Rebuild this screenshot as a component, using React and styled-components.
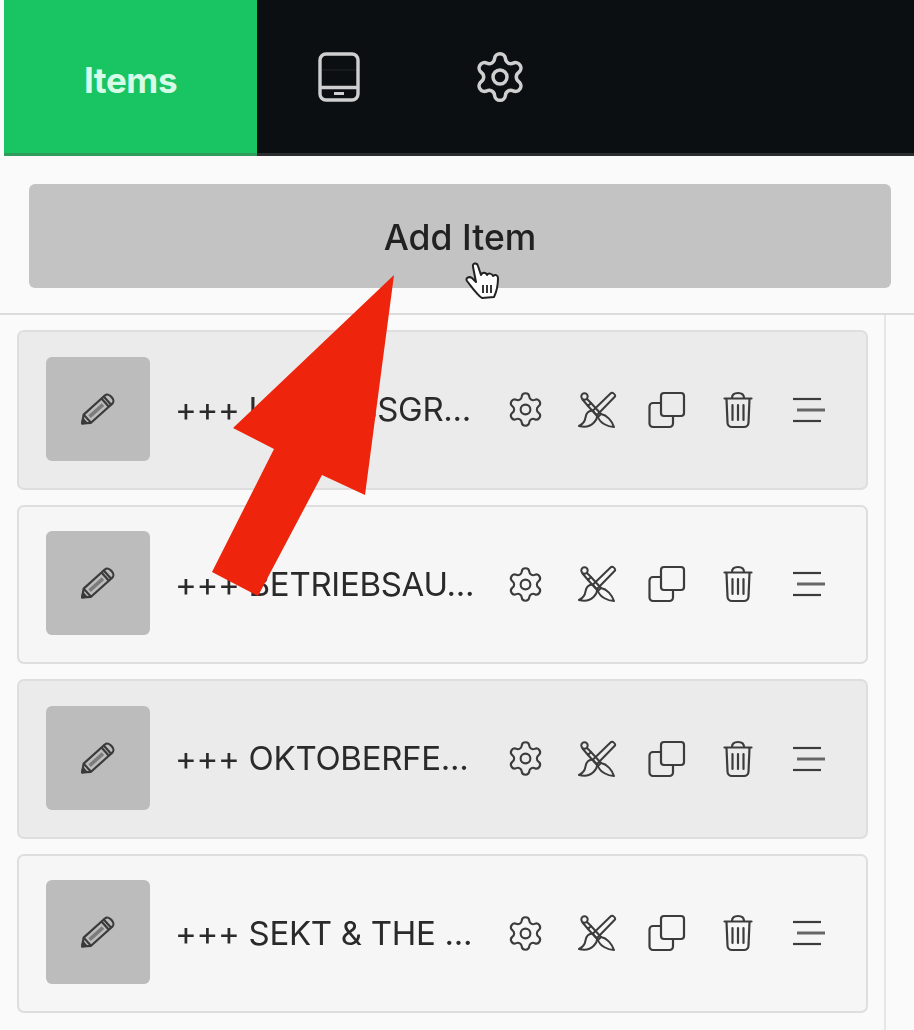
import React from 'react';
import styled, { createGlobalStyle } from 'styled-components';
import { Settings } from 'lucide-react';

const GlobalStyle = createGlobalStyle`
  html, body {
    margin: 0;
    padding: 0;
    background: #fafafa;
  }
`;

const Page = styled.div`
  position: relative;
  width: 914px;
  height: 1030px;
  overflow: hidden;
  background: #fafafa;
  font-family: Inter, "Liberation Sans", sans-serif;
`;

const Content = styled.div`
  position: relative;
  height: 1030px;
  filter: blur(0.6px);
`;

const TopBar = styled.div`
  display: flex;
  align-items: stretch;
  height: 153px;
  margin-left: 4px;
  background: #0b0f11;
  border-bottom: 3px solid #2b2e30;
`;

const ActiveTab = styled.div`
  display: flex;
  align-items: center;
  justify-content: center;
  width: 253px;
  margin-bottom: -3px;
  padding-top: 7px;
  box-sizing: border-box;
  background: #19c463;
  border-bottom: 3px solid #2f9c5c;
  color: #d6fbe6;
  font-size: 35px;
  font-weight: 700;
  letter-spacing: -0.4px;
`;

const TabIcon = styled.div`
  display: flex;
  align-items: center;
  justify-content: center;
  width: ${(p) => p.$width}px;
  color: #cfcfcf;
`;

const Toolbar = styled.div`
  box-sizing: border-box;
  height: 159px;
  padding: 28px 23px 25px 29px;
  border-bottom: 2px solid #dcdcdc;
`;

const AddButton = styled.div`
  display: flex;
  align-items: center;
  justify-content: center;
  box-sizing: border-box;
  height: 104px;
  padding-top: 2px;
  border-radius: 6px;
  background: #c3c3c3;
  color: #222;
  font-size: 35.5px;
  font-weight: 500;
`;

const ListArea = styled.div`
  display: flex;
  flex-direction: column;
  gap: 15px;
  box-sizing: border-box;
  width: 886px;
  height: 716px;
  padding: 15px 16px 0 17px;
  border-right: 2px solid #e6e6e6;
`;

const Card = styled.div`
  display: flex;
  align-items: center;
  flex: none;
  box-sizing: border-box;
  width: 851px;
  height: 159.5px;
  padding-left: 27px;
  border: 2px solid #dedede;
  border-radius: 7px;
  background: ${(p) => (p.$shaded ? '#ebebeb' : '#f6f6f6')};
`;

const Thumb = styled.div`
  display: flex;
  align-items: center;
  justify-content: center;
  flex: none;
  box-sizing: border-box;
  width: 104px;
  height: 104px;
  margin-bottom: 2px;
  padding: 2px 3px 0 0;
  border-radius: 6px;
  background: #bcbcbc;
  color: #3a3a3a;
`;

const CardTitle = styled.div`
  flex: none;
  width: 315.5px;
  margin-left: 25px;
  margin-bottom: 1px;
  color: #2a2a2a;
  font-size: 33px;
  font-weight: 400;
  letter-spacing: -0.3px;
  white-space: nowrap;
`;

const Actions = styled.div`
  display: flex;
  align-items: center;
`;

const ActionSlot = styled.div`
  display: flex;
  align-items: center;
  justify-content: center;
  width: 70.8px;
  color: #3c3c3c;
`;

const Overlay = styled.svg`
  position: absolute;
  top: 0;
  left: 0;
  pointer-events: none;
`;

const TabletIcon = () => (
  <svg width="44" height="52" viewBox="0 0 44 52" fill="none" stroke="currentColor" strokeWidth="3.4">
    <rect x="3" y="3" width="38" height="46" rx="6" />
    <path d="M3 36.5H41" />
    <path d="M17 42.500H27" strokeWidth="3" />
    <path d="M5 19H39" strokeWidth="1" stroke="#232628" />
  </svg>
);

const PencilIcon = () => (
  <svg width="44" height="44" viewBox="0 0 44 44" fill="none" stroke="currentColor" strokeWidth="2.200" strokeLinejoin="round">
    <g transform="rotate(-42 22 22)">
      <path d="M2 22L9 16.500H36V27.500H9Z" />
      <path d="M9 16.500V27.500" />
      <path d="M2 22L5.500 19.500V24.500Z" fill="currentColor" />
      <path d="M36 16.500H38A3.500 5.500 0 0 1 38 27.500H36" />
      <path d="M33 16.500V27.500" />
      <path d="M12 22H30" strokeWidth="3.600" stroke="#7c7c7c" />
    </g>
  </svg>
);

const ToolsIcon = () => (
  <svg width="40" height="38" viewBox="0 0 40 38" fill="none" stroke="currentColor" strokeWidth="2" strokeLinecap="round" strokeLinejoin="round">
    <circle cx="7.500" cy="5.500" r="3.200" />
    <path d="M10 8L14 12L11 15L5.500 8.500" />
    <path d="M14 12L24 23" />
    <path d="M11 15L21 26" />
    <path d="M24 23C30 24 35 30 37 36C31 36 23 32 21 26Z" />
    <path d="M36 2C37.500 3 38.500 4.500 38 5.500L20 24C18 22.500 16.500 21 16 19.500L33 3C34 2 35 1.500 36 2Z" />
    <path d="M16 19.500C11 19.500 9 23 8.500 26.500C8 30 6 33 2 35C7.500 36.500 13 35.500 16.500 32C19.500 29 20.500 26.500 20 24" />
  </svg>
);

const CopyIcon = () => (
  <svg width="38" height="38" viewBox="0 0 38 38" fill="none" stroke="currentColor" strokeWidth="2.200" strokeLinejoin="round">
    <rect x="13" y="2" width="23" height="23" rx="3" />
    <path d="M13 12H5A3.500 3.500 0 0 0 1.500 15.500V32.500A3.500 3.500 0 0 0 5 36H21.500A3.500 3.500 0 0 0 25 32.500V25" />
  </svg>
);

const TrashIcon = () => (
  <svg width="30" height="38" viewBox="0 0 30 38" fill="none" stroke="currentColor" strokeWidth="2.200" strokeLinecap="round" strokeLinejoin="round">
    <path d="M1.500 7.500H28.500" />
    <path d="M9 7C9 3.500 11 2 15 2C19 2 21 3.500 21 7" />
    <path d="M3.500 8L4.500 31.500A4.500 4.500 0 0 0 9 36H21A4.500 4.500 0 0 0 25.500 31.500L26.500 8" />
    <path d="M9.500 14V29" />
    <path d="M15 14V29" />
    <path d="M20.500 14V29" />
  </svg>
);

const MenuIcon = () => (
  <svg width="36" height="28" viewBox="0 0 36 28" fill="none" stroke="currentColor" strokeWidth="2.200" strokeLinecap="butt">
    <path d="M2 3H30" />
    <path d="M6 14H34" strokeWidth="3" stroke="#666" />
    <path d="M2 25H30" />
  </svg>
);

const items = [
  { id: 1, title: '+++ LOBENSSGR...', shaded: true },
  { id: 2, title: '+++ BETRIEBSAU...', shaded: false },
  { id: 3, title: '+++ OKTOBERFE...', shaded: true },
  { id: 4, title: '+++ SEKT & THE ...', shaded: false },
];

const App = () => (
  <Page>
    <GlobalStyle />
    <Content>
      <TopBar>
        <ActiveTab>Items</ActiveTab>
        <TabIcon $width={164}>
          <TabletIcon />
        </TabIcon>
        <TabIcon $width={158}>
          <Settings size={56} strokeWidth={1.5} />
        </TabIcon>
      </TopBar>
      <Toolbar>
        <AddButton>Add Item</AddButton>
      </Toolbar>
      <ListArea>
        {items.map((item) => (
          <Card key={item.id} $shaded={item.shaded}>
            <Thumb>
              <PencilIcon />
            </Thumb>
            <CardTitle>{item.title}</CardTitle>
            <Actions>
              <ActionSlot>
                <Settings size={39} strokeWidth={1.3} />
              </ActionSlot>
              <ActionSlot>
                <ToolsIcon />
              </ActionSlot>
              <ActionSlot>
                <CopyIcon />
              </ActionSlot>
              <ActionSlot>
                <TrashIcon />
              </ActionSlot>
              <ActionSlot>
                <MenuIcon />
              </ActionSlot>
            </Actions>
          </Card>
        ))}
      </ListArea>
      <Overlay width="914" height="1030" viewBox="0 0 914 1030">
        <path
          d="M482 298C477 295 471 286 467 281C465 278 469 276 472 278L476 282L473 267C472 263 477 262 478 266L481 275C482 272 486 272 487 275C488 273 492 273 493 276C495 274 498 275 498 278C498 285 497 291 494 297Z"
          fill="#fff"
          stroke="#222"
          strokeWidth="2"
          strokeLinejoin="round"
        />
        <path d="M483 285V293M487 285V293M491 285V293" stroke="#222" strokeWidth="1.800" />
      </Overlay>
    </Content>
    <Overlay width="914" height="1030" viewBox="0 0 914 1030">
      <polygon
        points="394,275 365,495 322,475 258,596 212,572 274,449 233,428"
        fill="#ee240c"
      />
    </Overlay>
  </Page>
);

export default App;
